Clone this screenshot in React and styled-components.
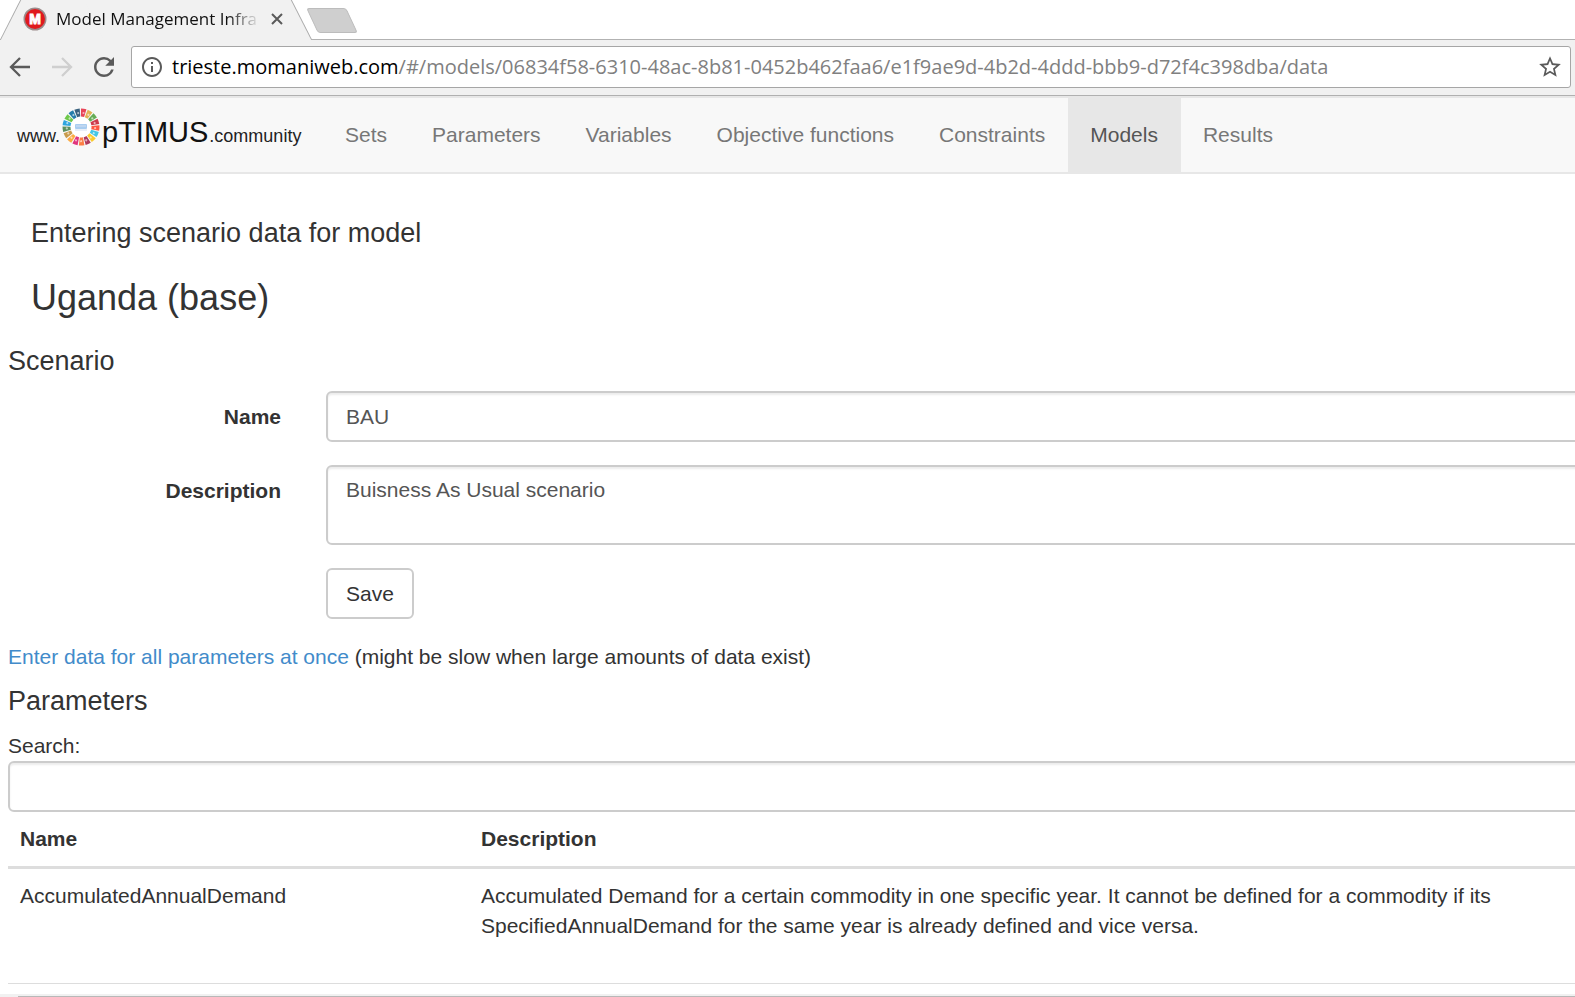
import React, { useState } from "react";
import styled, { createGlobalStyle, css } from "styled-components";
import { MdInfoOutline, MdRefresh, MdStarBorder } from "react-icons/md";

const GlobalStyle = createGlobalStyle`
  *, *::before, *::after { box-sizing: border-box; }
  body {
    margin: 0;
    background: #fff;
    color: #333;
    font: 21px/30px "Liberation Sans", Arial, sans-serif;
  }
  button, input, textarea { font: inherit; }
`;

const chromeFont = css`
  font-family: "Open Sans", "Segoe UI", sans-serif;
`;

const Window = styled.div`
  display: flex;
  flex-direction: column;
  height: 100vh;
  overflow: hidden;
`;

/* ---------- browser frame ---------- */

const TabStrip = styled.div`
  display: flex;
  flex: none;
  height: 40px;
  border-bottom: 1px solid #b2b2b2;
  background: #fff;
`;

const Tab = styled.div`
  ${chromeFont}
  position: relative;
  isolation: isolate;
  display: flex;
  align-items: center;
  width: 312px;
  height: 40px;
  padding: 0 27px 2px 23px;
  font-size: 17px;
  line-height: 24px;
  color: #111;

  &::before,
  &::after {
    content: "";
    position: absolute;
    z-index: -1;
    top: 0;
    bottom: 0;
    background: #f1f1f1;
  }
  &::before {
    left: 10px;
    right: 30%;
    border-left: 1px solid #a9a9a9;
    transform: skewX(-27deg);
  }
  &::after {
    left: 30%;
    right: 10px;
    border-right: 1px solid #a9a9a9;
    transform: skewX(27deg);
  }
`;

const TabTitle = styled.span`
  flex: 1;
  margin: 0 9px;
  white-space: nowrap;
  mask-image: linear-gradient(to right, #000 84%, transparent);
`;

const IconButton = styled.button`
  display: flex;
  align-items: center;
  justify-content: center;
  flex: none;
  width: ${(p) => p.$size}px;
  height: ${(p) => p.$size}px;
  padding: 0;
  border: 0;
  background: none;
  color: ${(p) => (p.disabled ? "#cfcfcf" : "#5a5a5a")};
`;

const NewTab = styled.button`
  width: 40px;
  height: 25px;
  margin: 8px 0 0;
  padding: 0;
  border: 1px solid #bcbcbc;
  border-radius: 3px;
  background: #cfcfcf;
  transform: skewX(25deg);
`;

const Toolbar = styled.div`
  display: flex;
  align-items: center;
  gap: 12px;
  flex: none;
  padding: 6px 4px 7px 5px;
  border-bottom: 1px solid #b0b0b0;
  background: #f1f1f1;
`;

const AddressBar = styled.div`
  ${chromeFont}
  display: flex;
  align-items: center;
  gap: 8px;
  flex: 1;
  min-width: 0;
  height: 42px;
  padding: 0 7px 0 8px;
  border: 1px solid #a6a6a6;
  border-radius: 3px;
  background: #fff;
  color: #5a5a5a;
`;

const Address = styled.div`
  flex: 1;
  overflow: hidden;
  white-space: nowrap;
  font-size: 20px;
  color: #808080;
  outline: 0;
`;

const Host = styled.span`
  color: #000;
`;

/* ---------- site navigation ---------- */

const Viewport = styled.div`
  flex: 1;
  min-height: 0;
  overflow: hidden;
`;

const Navbar = styled.nav`
  display: flex;
  border: solid #e7e7e7;
  border-width: 2px 0;
  background: #f8f8f8;
`;

const Brand = styled.a`
  flex: 0 0 323px;
  padding: 10px 0 0 17px;
  white-space: nowrap;
  font-size: 18px;
  line-height: 38px;
  color: #222;
  text-decoration: none;
`;

const BrandName = styled.span`
  margin-right: 1px;
  font-size: 29px;
  color: #111;
`;

const Emblem = styled.svg`
  width: 38px;
  height: 38px;
  margin: 0 2px;
  vertical-align: -4px;
`;

const NavItem = styled.a`
  padding: 22px 23px 22px 22px;
  white-space: nowrap;
  text-decoration: none;
  background: ${(p) => (p.$active ? "#e7e7e7" : "transparent")};
  color: ${(p) => (p.$active ? "#555" : "#777")};
`;

/* ---------- page ---------- */

const Page = styled.main`
  width: calc(100% + 48px);
  padding: 44px 8px 0;
`;

const Intro = styled.header`
  display: grid;
  gap: 30px;
  padding: 0 23px;
`;

const Heading = styled.h4`
  margin: 0;
  font-size: 27px;
  line-height: 30px;
  font-weight: 400;
`;

const ModelName = styled.h3`
  margin: 0;
  font-size: 36px;
  line-height: 40px;
  font-weight: 400;
`;

const ScenarioForm = styled.form`
  display: grid;
  grid-template-columns: 273px 1fr;
  column-gap: 45px;
  row-gap: 23px;
  margin: 15px 0 23px;
`;

const Label = styled.label`
  padding-top: 11px;
  text-align: right;
  font-weight: 700;
`;

const control = css`
  display: block;
  padding: 9px 18px 8px;
  border: 2px solid #ccc;
  border-radius: 6px;
  background: #fff;
  line-height: 30px;
`;

const field = css`
  ${control}
  width: 100%;
  color: #555;
  box-shadow: inset 0 2px 2px rgba(0, 0, 0, 0.075);
  outline: 0;
`;

const TextInput = styled.input`
  ${field}
  height: 51px;
`;

const TextArea = styled.textarea`
  ${field}
  height: 80px;
  padding-top: 8px;
  resize: none;
`;

const SaveButton = styled.button`
  ${control}
  grid-column: 2;
  justify-self: start;
  color: #333;
`;

const Link = styled.a`
  color: #428bca;
  text-decoration: none;
`;

const Section = styled.section`
  margin-top: ${(p) => p.$gap}px;
`;

const SearchLabel = styled.label`
  display: block;
  margin-top: 15px;
`;

const DataTable = styled.table`
  width: 100%;
  border-collapse: separate;
  border-spacing: 0;
  table-layout: fixed;
`;

const HeadCell = styled.th`
  width: ${(p) => p.$width || "auto"};
  padding: 12px;
  border-bottom: 3px solid #ddd;
  text-align: left;
`;

const Cell = styled.td`
  height: 115px;
  padding: 12px;
  border-bottom: 1px solid #ddd;
  vertical-align: top;
`;

const CellText = styled.p`
  max-width: 1040px;
  margin: 0;
`;

const ScrollTrack = styled.div`
  flex: none;
  padding: 2px 0 0 18px;
  background: #f1f1f1;
`;

const ScrollThumb = styled.div`
  height: 1px;
  background: #b8b8b8;
`;

const goalColors = [
  "#e5243b", "#dda63a", "#4c9f38", "#c5192d", "#ff3a21", "#26bde2",
  "#fcc30b", "#a21942", "#fd6925", "#dd1367", "#fd9d24", "#bf8b2e",
  "#3f7e44", "#0a97d9", "#56c02b", "#00689d", "#19486a",
];

function GoalWheel() {
  const step = (2 * Math.PI * 14.5) / goalColors.length;
  return (
    <Emblem viewBox="0 0 38 38" aria-hidden="true">
      <circle cx="19" cy="19" r="11" fill="#fff" />
      {goalColors.map((color, i) => (
        <g key={color} transform={`rotate(${(i * 360) / 17 - 90} 19 19)`}>
          <circle
            cx="19" cy="19" r="14.5" fill="none" stroke={color} strokeWidth="8"
            strokeDasharray={`${step - 1} 100`} opacity="0.85"
          />
          <circle cx="33" cy="21.5" r="1.1" fill="#fff" opacity="0.6" />
        </g>
      ))}
      <rect x="13" y="16" width="12" height="5" rx="1" fill="#a9cdf0" />
      <path d="M14 18h10M13 22h12" stroke="#d4dff0" strokeWidth="1.2" />
    </Emblem>
  );
}

function Favicon() {
  return (
    <svg width="24" height="24" viewBox="0 0 24 24" aria-hidden="true">
      <circle cx="12" cy="12" r="11.5" fill="#9b8c8c" />
      <circle cx="12" cy="12" r="10" fill="#e0191d" />
      <text
        x="12" y="17" textAnchor="middle" fontSize="14" fontWeight="700"
        fontFamily="Liberation Sans" fill="#fff" stroke="#fff" strokeWidth="1"
      >
        M
      </text>
    </svg>
  );
}

function Arrow({ flip }) {
  return (
    <svg width="30" height="30" viewBox="0 0 30 30" fill="none" stroke="currentColor" strokeWidth="2.3" aria-hidden="true">
      <path d={flip ? "M5 15h18M15 6l9 9-9 9" : "M25 15H7M15 6l-9 9 9 9"} />
    </svg>
  );
}

const navItems = [
  "Sets", "Parameters", "Variables", "Objective functions",
  "Constraints", "Models", "Results",
];

const parameters = [
  {
    name: "AccumulatedAnnualDemand",
    description:
      "Accumulated Demand for a certain commodity in one specific year. It cannot be defined for a commodity if its SpecifiedAnnualDemand for the same year is already defined and vice versa.",
  },
];

export default function App() {
  const [name, setName] = useState("BAU");
  const [description, setDescription] = useState("Buisness As Usual scenario");
  const [query, setQuery] = useState("");
  const rows = parameters.filter((p) => p.name.toLowerCase().includes(query.toLowerCase()));

  return (
    <Window>
      <GlobalStyle />
      <TabStrip>
        <Tab>
          <Favicon />
          <TabTitle>Model Management Infra</TabTitle>
          <IconButton $size={16} aria-label="Close tab">
            <svg width="12" height="12" viewBox="0 0 12 12" stroke="currentColor" strokeWidth="2" aria-hidden="true">
              <path d="M1 1l10 10M11 1L1 11" />
            </svg>
          </IconButton>
        </Tab>
        <NewTab aria-label="New tab" />
      </TabStrip>
      <Toolbar>
        <IconButton $size={30} aria-label="Back"><Arrow /></IconButton>
        <IconButton $size={30} aria-label="Forward" disabled><Arrow flip /></IconButton>
        <IconButton $size={30} aria-label="Reload"><MdRefresh size={30} /></IconButton>
        <AddressBar>
          <MdInfoOutline size={24} />
          <Address role="textbox" aria-label="Address" contentEditable suppressContentEditableWarning spellCheck={false}>
            <Host>trieste.momaniweb.com</Host>
            /#/models/06834f58-6310-48ac-8b81-0452b462faa6/e1f9ae9d-4b2d-4ddd-bbb9-d72f4c398dba/data
          </Address>
          <IconButton $size={26} aria-label="Bookmark"><MdStarBorder size={26} /></IconButton>
        </AddressBar>
      </Toolbar>

      <Viewport>
        <Navbar>
          <Brand href="#/">
            www.<GoalWheel /><BrandName>pTIMUS</BrandName>.community
          </Brand>
          {navItems.map((item) => (
            <NavItem key={item} href="#/" $active={item === "Models"}>{item}</NavItem>
          ))}
        </Navbar>

        <Page>
          <Intro>
            <Heading>Entering scenario data for model</Heading>
            <ModelName>Uganda (base)</ModelName>
          </Intro>

          <Section $gap={28}>
            <Heading>Scenario</Heading>
            <ScenarioForm onSubmit={(e) => e.preventDefault()}>
              <Label htmlFor="name">Name</Label>
              <TextInput id="name" value={name} onChange={(e) => setName(e.target.value)} />
              <Label htmlFor="description">Description</Label>
              <TextArea
                id="description" spellCheck={false} value={description}
                onChange={(e) => setDescription(e.target.value)}
              />
              <SaveButton>Save</SaveButton>
            </ScenarioForm>
            <Link href="#/">Enter data for all parameters at once</Link> (might be slow when large amounts of data exist)
          </Section>

          <Section $gap={14}>
            <Heading>Parameters</Heading>
            <SearchLabel htmlFor="search">Search:</SearchLabel>
            <TextInput id="search" value={query} onChange={(e) => setQuery(e.target.value)} />
            <DataTable>
              <thead>
                <tr>
                  <HeadCell $width="461px">Name</HeadCell>
                  <HeadCell>Description</HeadCell>
                </tr>
              </thead>
              <tbody>
                {rows.map((row) => (
                  <tr key={row.name}>
                    <Cell>{row.name}</Cell>
                    <Cell><CellText>{row.description}</CellText></Cell>
                  </tr>
                ))}
              </tbody>
            </DataTable>
          </Section>
        </Page>
      </Viewport>
      <ScrollTrack><ScrollThumb /></ScrollTrack>
    </Window>
  );
}
